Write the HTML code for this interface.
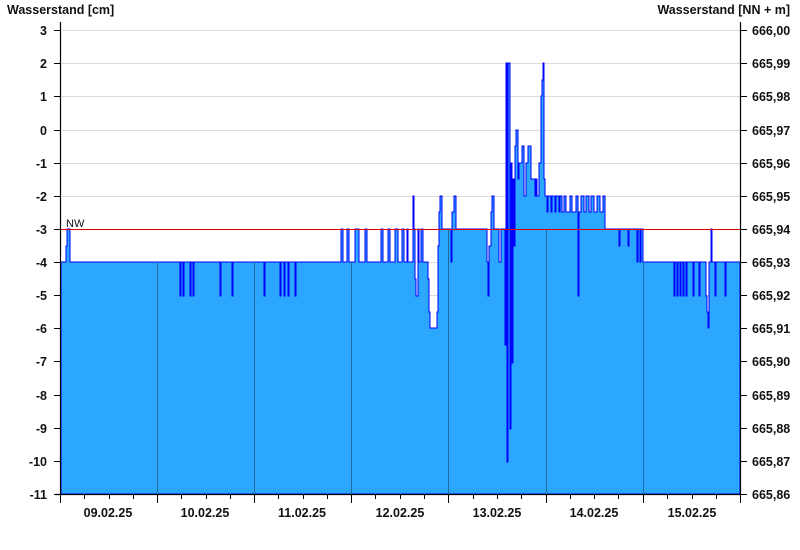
<!DOCTYPE html>
<html><head><meta charset="utf-8"><style>
html,body{margin:0;padding:0;background:#fff}
svg{display:block}
text{font-family:"Liberation Sans",Arial,sans-serif;font-weight:bold;font-size:12.5px;fill:#111}
</style></head><body>
<svg width="800" height="550" viewBox="0 0 800 550" xmlns="http://www.w3.org/2000/svg">
<text x="7" y="14" font-size="13">Wasserstand [cm]</text>
<text x="790" y="14" font-size="13" text-anchor="end">Wasserstand [NN + m]</text>
<g stroke="#dcdcdc" stroke-width="1">
<line x1="61" x2="740" y1="30.5" y2="30.5"/><line x1="61" x2="740" y1="63.5" y2="63.5"/><line x1="61" x2="740" y1="96.5" y2="96.5"/><line x1="61" x2="740" y1="130.5" y2="130.5"/><line x1="61" x2="740" y1="163.5" y2="163.5"/><line x1="61" x2="740" y1="196.5" y2="196.5"/><line x1="61" x2="740" y1="262.5" y2="262.5"/><line x1="61" x2="740" y1="295.5" y2="295.5"/><line x1="61" x2="740" y1="328.5" y2="328.5"/><line x1="61" x2="740" y1="361.5" y2="361.5"/><line x1="61" x2="740" y1="395.5" y2="395.5"/><line x1="61" x2="740" y1="428.5" y2="428.5"/><line x1="61" x2="740" y1="461.5" y2="461.5"/>
</g>
<path fill="#2ba7ff" stroke="#0000ff" stroke-width="1" d="M61,494 V262 H66 V246 H67 V229 H70 V262
H180 V296 H181 V262 H183 V296 H184 V262 H190 V296 H191 V262 H193 V296 H194 V262
H220 V296 H221 V262 H232 V296 H233 V262 H264 V296 H265 V262 H280 V296 H281 V262 H284 V296 H285 V262 H288 V296 H289 V262 H295 V296 H296 V262
H341 V229 H343 V262 H347 V229 H349 V262 H355 V229 H359 V262 H365 V229 H367 V262 H381 V229 H383 V262 H388 V229 H390 V262 H395 V229 H398 V262 H402 V229 H404 V262 H407 V229 H408 V262 H413 V196 H414 V229 H415 V279 H416 V296 H418 V229 H419 V262 H421 V229 H423 V262 H428 V279 H429 V312 H430 V328 H437 V312 H438 V246 H439 V212 H440 V196 H442 V229 H451 V262 H452 V212 H454 V196 H456 V229
H487 V262 H488 V296 H489 V246 H491 V212 H492 V196 H494 V229 H499 V262 H501 V229 H505 V345 H506 V63 H507 V462 H508 V63 H510 V429 H511 V163 H512 V363 H513 V179 H514 V246 H515 V146 H516 V130 H518 V179 H519 V163 H522 V146 H524 V196 H526 V163 H528 V146 H531 V179 H535 V196 H536 V179 H537 V196 H539 V163 H541 V96 H542 V80 H543 V63 H544 V179 H545 V196
H547 V212 H548 V196 H551 V212 H552 V196 H555 V212 H556 V196 H559 V212 H560 V196 H562 V212 H564 V196 H566 V212 H570 V196 H572 V212 H576 V196 H578 V296 H579 V212 H581 V196 H584 V212 H586 V196 H589 V212 H591 V196 H594 V212 H597 V196 H600 V212 H603 V196 H605 V229
H619 V246 H620 V229 H628 V246 H629 V229 H637 V262 H638 V229 H640 V262 H641 V229 H643 V262
H674 V296 H675 V262 H677 V296 H678 V262 H680 V296 H681 V262 H683 V296 H684 V262 H686 V296 H687 V262 H693 V296 H694 V262 H699 V296 H700 V262 H706 V296 H707 V312 H708 V328 H709 V262 H711 V229 H712 V262 H715 V296 H716 V262 H725 V296 H726 V262 H740 V494 Z"/>
<g stroke="#1f6aa0" stroke-width="1">
<line x1="157.5" x2="157.5" y1="262" y2="494"/><line x1="254.5" x2="254.5" y1="262" y2="494"/><line x1="351.5" x2="351.5" y1="262" y2="494"/><line x1="448.5" x2="448.5" y1="229" y2="494"/><line x1="546.5" x2="546.5" y1="229" y2="494"/><line x1="643.5" x2="643.5" y1="262" y2="494"/>
</g>
<line x1="61" x2="740" y1="229.5" y2="229.5" stroke="#e00000" stroke-width="1"/>
<text x="66" y="227" style="font-size:11px;font-weight:normal">NW</text>
<g stroke="#000" stroke-width="1.2">
<line x1="60.5" x2="60.5" y1="22" y2="495"/><line x1="740.5" x2="740.5" y1="22" y2="495"/><line x1="55" x2="741" y1="494.5" y2="494.5"/>
</g>
<g stroke="#000" stroke-width="1">
<path d="M54,30.5H60M54,63.5H60M54,96.5H60M54,130.5H60M54,163.5H60M54,196.5H60M54,229.5H60M54,262.5H60M54,295.5H60M54,328.5H60M54,361.5H60M54,395.5H60M54,428.5H60M54,461.5H60M54,494.5H60"/>
<path d="M741,30.5H747M741,63.5H747M741,96.5H747M741,130.5H747M741,163.5H747M741,196.5H747M741,229.5H747M741,262.5H747M741,295.5H747M741,328.5H747M741,361.5H747M741,395.5H747M741,428.5H747M741,461.5H747M741,494.5H747"/>
<path d="M60.5,494V503M157.5,494V503M254.5,494V503M351.5,494V503M448.5,494V503M546.5,494V503M643.5,494V503M740.5,494V503"/>
<path d="M84.5,494V499M109.5,494V499M133.5,494V499M181.5,494V499M206.5,494V499M230.5,494V499M278.5,494V499M303.5,494V499M327.5,494V499M375.5,494V499M400.5,494V499M424.5,494V499M473.5,494V499M497.5,494V499M521.5,494V499M570.5,494V499M594.5,494V499M618.5,494V499M667.5,494V499M692.5,494V499M716.5,494V499"/>
</g>
<g text-anchor="end">
<text x="47" y="35">3</text><text x="47" y="68">2</text><text x="47" y="101">1</text><text x="47" y="135">0</text><text x="47" y="168">-1</text><text x="47" y="201">-2</text><text x="47" y="234">-3</text><text x="47" y="267">-4</text><text x="47" y="300">-5</text><text x="47" y="333">-6</text><text x="47" y="366">-7</text><text x="47" y="400">-8</text><text x="47" y="433">-9</text><text x="47" y="466">-10</text><text x="47" y="499">-11</text>
</g>
<g>
<text x="752" y="35">666,00</text><text x="752" y="68">665,99</text><text x="752" y="101">665,98</text><text x="752" y="135">665,97</text><text x="752" y="168">665,96</text><text x="752" y="201">665,95</text><text x="752" y="234">665,94</text><text x="752" y="267">665,93</text><text x="752" y="300">665,92</text><text x="752" y="333">665,91</text><text x="752" y="366">665,90</text><text x="752" y="400">665,89</text><text x="752" y="433">665,88</text><text x="752" y="466">665,87</text><text x="752" y="499">665,86</text>
</g>
<g text-anchor="middle">
<text x="108" y="517">09.02.25</text><text x="205" y="517">10.02.25</text><text x="302" y="517">11.02.25</text><text x="400" y="517">12.02.25</text><text x="497" y="517">13.02.25</text><text x="594" y="517">14.02.25</text><text x="692" y="517">15.02.25</text>
</g>
</svg>
</body></html>
